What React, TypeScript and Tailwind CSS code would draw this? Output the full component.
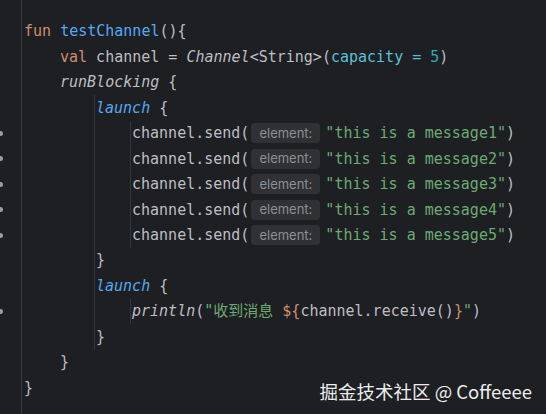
import React from 'react';

// IntelliJ-style dark editor snippet: Kotlin channel example
type Tok = { t: string; c?: string; i?: boolean };

const KW = 'text-[#cf8e6d]';
const FN = 'text-[#56a8f5]';
const TX = 'text-[#bcbec4]';
const STR = 'text-[#6aab73]';
const NAMED = 'text-[#56c1d6]';
const NUM = 'text-[#2aacb8]';

interface LineDef {
  indent: number;
  guides?: number[];
  marker?: boolean;
  hint?: boolean;
  toks: Tok[];
}

const send = (n: number): LineDef => ({
  indent: 3,
  guides: [1, 2],
  marker: true,
  hint: true,
  toks: [
    { t: 'channel.send(', c: TX },
    { t: `"this is a message${n}"`, c: STR },
    { t: ')', c: TX },
  ],
});

const lines: LineDef[] = [
  { indent: 0, toks: [{ t: 'fun ', c: KW }, { t: 'testChannel', c: FN }, { t: '(){', c: TX }] },
  {
    indent: 1,
    toks: [
      { t: 'val', c: KW },
      { t: ' channel = ', c: TX },
      { t: 'Channel', c: TX, i: true },
      { t: '<String>(', c: TX },
      { t: 'capacity = ', c: NAMED },
      { t: '5', c: NUM },
      { t: ')', c: TX },
    ],
  },
  { indent: 1, toks: [{ t: 'runBlocking', c: TX, i: true }, { t: ' {', c: TX }] },
  { indent: 2, guides: [1], toks: [{ t: 'launch', c: FN, i: true }, { t: ' {', c: TX }] },
  send(1),
  send(2),
  send(3),
  send(4),
  send(5),
  { indent: 2, guides: [1], toks: [{ t: '}', c: TX }] },
  { indent: 2, guides: [1], toks: [{ t: 'launch', c: FN, i: true }, { t: ' {', c: TX }] },
  {
    indent: 3,
    guides: [1, 2],
    marker: true,
    toks: [
      { t: 'println', c: TX, i: true },
      { t: '(', c: TX },
      { t: '"收到消息 ', c: STR },
      { t: '${', c: KW },
      { t: 'channel.receive()', c: TX },
      { t: '}', c: KW },
      { t: '"', c: STR },
      { t: ')', c: TX },
    ],
  },
  { indent: 2, guides: [1], toks: [{ t: '}', c: TX }] },
  { indent: 1, toks: [{ t: '}', c: TX }] },
  { indent: 0, toks: [{ t: '}', c: TX }] },
];

const InlayHint = () => (
  <span className="ml-[2px] mr-[5px] inline-flex h-[20px] items-center rounded-[4px] bg-[#2f3134] px-[8px] font-['Inter','Liberation_Sans',sans-serif] text-[13px] leading-none text-[#8c8f94]">
    element:
  </span>
);

const CodeLine = ({ line }: { line: LineDef }) => {
  const units = [];
  for (let i = 0; i < line.indent; i++) {
    const hasGuide = (line.guides || []).includes(i);
    units.push(
      <span
        key={i}
        className={`mr-[1px] h-full w-[35px] shrink-0 ${hasGuide ? 'border-r border-[#34363b]' : ''}`}
      />
    );
  }
  return (
    <div className="flex h-[25.45px] items-center whitespace-pre">
      {units}
      {line.toks.map((tk, idx) => (
        <React.Fragment key={idx}>
          <span className={`${tk.c || TX} ${tk.i ? 'italic' : ''}`}>{tk.t}</span>
          {line.hint && idx === 0 && <InlayHint />}
        </React.Fragment>
      ))}
    </div>
  );
};

export default function App() {
  return (
    <div className="relative flex h-[414px] w-[546px] overflow-hidden bg-[#1e1f22] font-['DejaVu_Sans_Mono','Noto_Sans_CJK_SC',monospace] text-[15px]">
      {/* Gutter */}
      <div className="h-full w-[22px] shrink-0 border-r border-[#393b40] pt-[19px]">
        {lines.map((l, i) => (
          <div key={i} className="flex h-[25.45px] items-center">
            {l.marker && <span className="h-[5px] w-[3px] rounded-r-full bg-[#9a9ca1]" />}
          </div>
        ))}
      </div>

      {/* Code */}
      <div className="h-full flex-1 pl-[2px] pt-[19px]">
        {lines.map((l, i) => (
          <CodeLine key={i} line={l} />
        ))}
      </div>

      {/* Watermark */}
      <div className="absolute bottom-[14px] right-[14px] font-['Noto_Sans_CJK_SC','Noto_Sans',sans-serif] text-[18.5px] leading-none text-[#ececec]">
        掘金技术社区 @ Coffeeee
      </div>
    </div>
  );
}
